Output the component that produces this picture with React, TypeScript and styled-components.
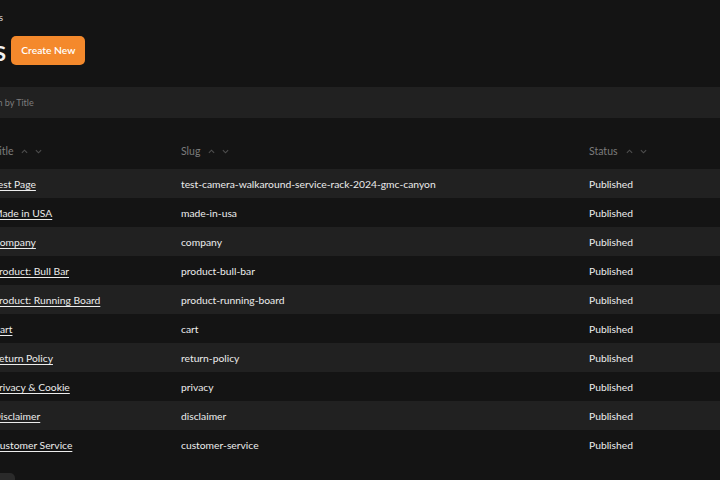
import React from "react";
import styled, { createGlobalStyle } from "styled-components";

const Global = createGlobalStyle`
  html, body { margin: 0; padding: 0; background: #141414; }
  body { overflow: hidden; width: 720px; height: 480px; font-family: Lato, "Open Sans", sans-serif; color: #e8e8e8; }
  * { box-sizing: border-box; }
`;

const Page = styled.div`
  margin-left: -66px;
  width: 860px;
  display: flex;
  flex-direction: column;
`;

const Crumbs = styled.nav`
  display: flex;
  align-items: center;
  gap: 6px;
  height: 34px;
  padding-left: 33px;
  font-size: 10px;
  color: #d8d8d8;
`;

const Sep = styled.span`
  color: #666;
`;

const Header = styled.header`
  display: flex;
  align-items: center;
  gap: 5px;
  height: 32px;
`;

const H1 = styled.h1`
  margin: 0;
  font-size: 28px;
  font-weight: 600;
  color: #f2f2f2;
  line-height: 32px;
`;

const CreateButton = styled.button`
  height: 29px;
  padding: 0 10px;
  border: none;
  border-radius: 5px;
  background: #f4892c;
  color: #fff;
  font-family: inherit;
  font-size: 10.3px;
  font-weight: 600;
`;

const Search = styled.div`
  margin-top: 21px;
  height: 31px;
  background: #212121;
  display: flex;
  align-items: center;
  padding-left: 42px;
  font-size: 9px;
  color: #7d7d7d;
`;

const Table = styled.div`
  margin-top: 21px;
  display: flex;
  flex-direction: column;
`;

const Row = styled.div<{ $shade?: boolean; $head?: boolean }>`
  display: grid;
  grid-template-columns: 59px 188px 408px 1fr;
  align-items: center;
  height: ${(p) => (p.$head ? "30px" : "29px")};
  background: ${(p) => (p.$shade ? "#212121" : "transparent")};
  font-size: 10.3px;
`;

const Cell = styled.div`
  white-space: nowrap;
  color: #ececec;
`;

const HeadCell = styled.div`
  display: flex;
  align-items: center;
  gap: 8px;
  color: #7c7c7c;
  font-size: 10.5px;
  padding-bottom: 6px;
`;

const Sorts = styled.span`
  display: flex;
  gap: 7px;
  color: #4e4e4e;
`;

const TitleLink = styled.a`
  color: #ececec;
  text-decoration: underline;
  text-underline-offset: 2px;
`;

const Footer = styled.div`
  margin-top: 14px;
  padding-left: 46px;
  display: flex;
`;

const PerPage = styled.div`
  width: 35px;
  height: 24px;
  border-radius: 5px;
  background: #2a2a2a;
`;

const Chevron = ({ up }: { up?: boolean }) => (
  <svg width="7" height="7" viewBox="0 0 8 8" fill="none" stroke="currentColor" strokeWidth="1.3">
    {up ? <path d="M1 5.5L4 2.5L7 5.5" /> : <path d="M1 2.5L4 5.5L7 2.5" />}
  </svg>
);

const rows: [string, string][] = [
  ["Test Page", "test-camera-walkaround-service-rack-2024-gmc-canyon"],
  ["Made in USA", "made-in-usa"],
  ["Company", "company"],
  ["Product: Bull Bar", "product-bull-bar"],
  ["Product: Running Board", "product-running-board"],
  ["Cart", "cart"],
  ["Return Policy", "return-policy"],
  ["Privacy & Cookie", "privacy"],
  ["Disclaimer", "disclaimer"],
  ["Customer Service", "customer-service"],
];

const Head = ({ label }: { label: string }) => (
  <HeadCell>
    {label}
    <Sorts>
      <Chevron up />
      <Chevron />
    </Sorts>
  </HeadCell>
);

export default function App() {
  return (
    <>
      <Global />
      <Page>
        <Crumbs>
          <Sep>/</Sep>
          <span>Pages</span>
        </Crumbs>
        <Header>
          <H1>Pages</H1>
          <CreateButton>Create New</CreateButton>
        </Header>
        <Search>Search by Title</Search>
        <Table>
          <Row $head>
            <div />
            <Head label="Title" />
            <Head label="Slug" />
            <Head label="Status" />
          </Row>
          {rows.map(([t, s], i) => (
            <Row key={s} $shade={i % 2 === 0}>
              <div />
              <Cell>
                <TitleLink href="#">{t}</TitleLink>
              </Cell>
              <Cell>{s}</Cell>
              <Cell>Published</Cell>
            </Row>
          ))}
        </Table>
        <Footer>
          <PerPage />
        </Footer>
      </Page>
    </>
  );
}
